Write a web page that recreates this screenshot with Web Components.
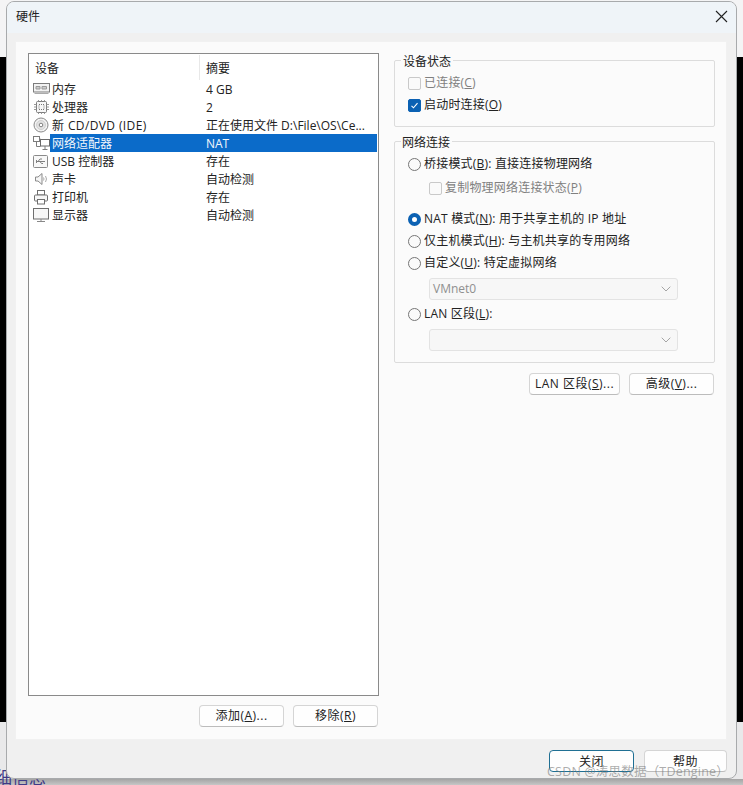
<!DOCTYPE html>
<html><head><meta charset="utf-8"><style>
html,body{margin:0;padding:0}
body{width:743px;height:785px;overflow:hidden;font:12px/16px "Open Sans","Noto Sans CJK SC",sans-serif;color:#222}
</style></head><body>
<template id="t-desktop"><style>
:host{display:block;position:relative;width:743px;height:785px;overflow:hidden;background:#e9e9ea}
.top{position:absolute;left:0;right:0;top:0;height:57px;background:#f4f4f5}
.black{position:absolute;left:0;right:0;top:57px;height:665px;background:#000}
.txt{position:absolute;left:-5px;top:765px;font:17px/24px "Noto Sans CJK SC",sans-serif;color:#3f3a86;white-space:nowrap}
.strip{position:absolute;left:0;right:0;top:779px;height:6px;background:linear-gradient(#a4a4a4,#c6c6c6)}
.win{position:absolute;left:6px;top:1px}
.wm{position:absolute;left:547px;top:764px;font:12.5px/16px "Open Sans","Noto Sans CJK SC",sans-serif;color:rgba(120,120,120,.62);white-space:nowrap;letter-spacing:.2px}
</style><div class="top"></div><div class="black"></div><div class="strip"></div><div class="txt">细信息</div>
<div class="win"><slot></slot></div><div class="wm">CSDN @涛思数据（TDengine）</div></template>

<template id="t-dialog"><style>
:host{display:flex;flex-direction:column;width:731px;height:778px;box-sizing:border-box;background:#f0f0f0;border:1px solid #a8aaac;border-radius:8px;overflow:hidden}
.bar{flex:none;height:31px;box-sizing:border-box;padding:0 8px 2px 9px;display:flex;align-items:center;justify-content:space-between;background:#eff4f8;font-size:12px}
.bar svg{display:block}
.main{flex:none;margin:8px 9px 0 8px;height:699px;display:flex;background:#fbfbfb;border:1px solid #f1f1f1;box-sizing:border-box}
.foot{flex:none;display:flex;justify-content:flex-end;gap:10px;padding:10px 9px 0 0}
</style><div class="bar"><span>硬件</span><svg width="13" height="13" viewBox="0 0 13 13"><path d="M1 1l11 11M12 1L1 12" stroke="#222" stroke-width="1.1" fill="none"/></svg></div>
<div class="main"><slot name="main"></slot></div><div class="foot"><slot name="foot"></slot></div></template>

<template id="t-btn"><style>
:host{display:flex;align-items:center;justify-content:center;box-sizing:border-box;height:22px;background:#fefefe;border:1px solid #d5d5d5;border-bottom-color:#bcbcbc;border-radius:4px;font-size:12px;color:#222;white-space:nowrap}
:host([primary]){border:1.5px solid #1f6f93}
:host([slot=foot][low]){padding-top:2px}
span{letter-spacing:.5px}
</style><span><slot></slot></span></template>

<template id="t-left"><style>
:host{display:flex;flex-direction:column;width:351px;margin:11px 0 0 12px;flex:none}
.foot{display:flex;justify-content:flex-end;gap:9px;margin-top:9px;padding-right:1px}
.list{box-sizing:border-box;height:643px;border:1px solid #8a8a8a;background:#fff;padding:1px}
</style><div class="list"><slot></slot></div><div class="foot"><slot name="foot"></slot></div></template>

<template id="t-head"><style>
:host{display:grid;grid-template-columns:169px 1fr;height:25px;align-items:center;margin-right:1px}
div{height:100%;display:flex;align-items:center;padding:2px 0 0 5px;box-sizing:border-box}
div+div{border-left:1px solid #e8e8e8;padding-left:6px}
</style><div>设备</div><div>摘要</div></template>

<template id="t-row"><style>
:host{display:grid;grid-template-columns:20px 149px 1fr;height:18px;align-items:center}
.i{padding-left:3px;height:18px;display:flex;align-items:center}
.n,.v{height:18px;line-height:20px;white-space:nowrap;padding-left:2px}
.v{padding-left:7px}
:host([selected]) .n,:host([selected]) .v{background:#0b6bc9;color:#f2f6fb}
:host([wide]) .n{letter-spacing:.38px}
</style><div class="i"><slot name="icon"></slot></div><div class="n"><slot></slot></div><div class="v"><slot name="val"></slot></div></template>

<template id="t-right"><style>
:host{display:flex;flex-direction:column;width:321px;margin:18px 0 0 15px;flex:none}
.foot{display:flex;justify-content:flex-end;gap:9px;margin-top:10px;padding-right:1px}
</style><slot></slot><div class="foot"><slot name="foot"></slot></div></template>

<template id="t-group"><style>
:host{display:block;position:relative;box-sizing:border-box;border:1px solid #dcdcdc;border-radius:2px;padding:11px 0 0 13px}
.lg{position:absolute;left:6px;top:-7px;padding:0 2px;background:#fbfbfb;line-height:16px}
</style><div class="lg"><slot name="legend"></slot></div><slot></slot></template>

<template id="t-opt"><style>
:host{display:flex;align-items:center;height:22px;gap:3px;white-space:nowrap}
:host([indent]){margin-left:21px}
:host([disabled]){color:#808080}
.b{width:11px;height:11px;border:1px solid #8d8d8d;border-radius:2px;background:#fafafa;flex:none;display:flex;align-items:center;justify-content:center}
:host([disabled]) .b{border-color:#c9c9c9}
:host([radio]) .b{border-radius:50%;border-color:#767676}
:host([checked]) .b{background:#0b61b3;border-color:#0b61b3}
:host([radio][checked]) .b{background:#fff;border:4px solid #0b61b3;width:5px;height:5px}
svg{display:none}
:host([checked]:not([radio])) svg{display:block}
.t{letter-spacing:.2px}
</style><div class="b"><svg width="9" height="9" viewBox="0 0 9 9"><path d="M1.5 4.8l2 2 4-4.6" stroke="#fff" stroke-width="1.1" fill="none"/></svg></div><span class="t"><slot></slot></span></template>

<template id="t-sel"><style>
:host{display:flex;align-items:center;justify-content:space-between;box-sizing:border-box;height:22px;width:249px;margin-left:21px;padding:0 6px 0 3px;border:1px solid #e3e3e3;border-radius:3px;background:#f7f7f7;color:#8f8f8f}
svg{display:block}
</style><span><slot></slot></span><svg width="10" height="6" viewBox="0 0 10 6"><path d="M.7.7L5 5 9.3.7" stroke="#a5a5a5" fill="none"/></svg></template>

<hw-desktop>
<hw-dialog>
 <hw-left slot="main">
  <hw-head></hw-head>
  <hw-row><svg slot="icon" width="17" height="14" viewBox="0 0 17 14" fill="none" stroke="#7c7c7c"><rect x=".5" y="1.500" width="16" height="8.500" fill="#f2f2f2"/><path d="M3 4.500h4v2.500H3zM9 4.500h4.500v2.500H9z" fill="#ccc" stroke="#9a9a9a"/><path d="M1.500 11.500h14" stroke="#aaa"/></svg>内存<span slot="val">4 GB</span></hw-row>
  <hw-row><svg slot="icon" width="17" height="16" viewBox="0 0 17 16" fill="none" stroke="#7c7c7c"><rect x="3.500" y="2.500" width="10" height="11" rx="1" fill="#f7f7f7"/><path d="M5.500 1v1.500M8.500 1v1.500M11.500 1v1.500M5.500 13.500V15M8.500 13.500V15M11.500 13.500V15M1 5.500h2.500M1 8h2.500M1 10.500h2.500M13.500 5.500H16M13.500 8H16M13.500 10.500H16" stroke="#999"/><rect x="6" y="5.500" width="5" height="5" stroke="#777" stroke-dasharray="1 1"/></svg>处理器<span slot="val">2</span></hw-row>
  <hw-row wide><svg slot="icon" width="16" height="16" viewBox="0 0 16 16" fill="none" stroke="#8a8a8a"><circle cx="8" cy="8" r="7" fill="#f2f2f2"/><circle cx="8" cy="8" r="4.500" stroke="#d0d0d0" fill="#e2e2e2"/><circle cx="8" cy="8" r="1.800" fill="#fff" stroke="#808080"/></svg>新 CD/DVD (IDE)<span slot="val">正在使用文件 D:\File\OS\Ce...</span></hw-row>
  <hw-row selected><svg slot="icon" width="17" height="14" viewBox="0 0 17 14" fill="none" stroke="#7c7c7c"><rect x=".5" y=".5" width="6" height="5" fill="#fff"/><rect x="7.500" y="3.500" width="9" height="6.500" fill="#fff" stroke="#6a6a6a"/><path d="M3.500 5.500v5h4M12 10v3M9.500 13.500h5M6.500 3h1" stroke="#7c7c7c"/></svg>网络适配器<span slot="val">NAT</span></hw-row>
  <hw-row><svg slot="icon" width="16" height="15" viewBox="0 0 16 15" fill="none" stroke="#8a8a8a"><rect x=".5" y="1.500" width="14" height="12" rx="1" fill="#f8f8f8"/><path d="M3 7.500h9M5 7.500l2-2.500h2M7 7.500l1.500 2H10M3.500 6v3" stroke="#808080"/></svg>USB 控制器<span slot="val">存在</span></hw-row>
  <hw-row><svg slot="icon" width="15" height="14" viewBox="0 0 15 14" fill="none" stroke="#8a8a8a"><path d="M2.500 5h2.500l4-3.500v11l-4-3.500H2.500z" fill="#f6f6f6"/><path d="M10.500 5.500q1 1.500 0 3M12.500 4q2 3 0 6" stroke="#aaa"/></svg>声卡<span slot="val">自动检测</span></hw-row>
  <hw-row><svg slot="icon" width="16" height="15" viewBox="0 0 16 15" fill="none" stroke="#6e6e6e"><rect x="4.500" y=".5" width="7" height="4.500" fill="#fff"/><rect x="1.500" y="5" width="13" height="6" rx="1" fill="#f6f6f6"/><rect x="4.500" y="9.500" width="7" height="4.500" fill="#fff"/></svg>打印机<span slot="val">存在</span></hw-row>
  <hw-row><svg slot="icon" width="17" height="15" viewBox="0 0 17 15" fill="none" stroke="#6e6e6e"><rect x=".5" y=".5" width="15" height="10.500" fill="#f7f7f7"/><path d="M8 11v2M4 13.500h8" stroke="#888"/></svg>显示器<span slot="val">自动检测</span></hw-row>
  <hw-btn slot="foot" style="width:85px">添加(<u>A</u>)...</hw-btn>
  <hw-btn slot="foot" style="width:85px">移除(<u>R</u>)</hw-btn>
 </hw-left>
 <hw-right slot="main">
  <hw-group style="height:67px"><span slot="legend">设备状态</span>
   <hw-opt disabled>已连接(<u>C</u>)</hw-opt>
   <hw-opt checked>启动时连接(<u>O</u>)</hw-opt>
  </hw-group>
  <hw-group style="height:222px;margin-top:14px"><span slot="legend" style="margin-left:-1px">网络连接</span>
   <hw-opt radio>桥接模式(<u>B</u>): 直接连接物理网络</hw-opt>
   <hw-opt indent disabled style="height:26px">复制物理网络连接状态(<u>P</u>)</hw-opt>
   <hw-opt radio checked style="margin-top:7px">NAT 模式(<u>N</u>): 用于共享主机的 IP 地址</hw-opt>
   <hw-opt radio>仅主机模式(<u>H</u>): 与主机共享的专用网络</hw-opt>
   <hw-opt radio>自定义(<u>U</u>): 特定虚拟网络</hw-opt>
   <hw-sel style="margin-top:4px">VMnet0</hw-sel>
   <hw-opt radio style="height:28px">LAN 区段(<u>L</u>):</hw-opt>
   <hw-sel style="margin-top:1px"></hw-sel>
  </hw-group>
  <hw-btn slot="foot" style="width:91px">LAN 区段(<u>S</u>)...</hw-btn>
  <hw-btn slot="foot" style="width:85px">高级(<u>V</u>)...</hw-btn>
 </hw-right>
 <hw-btn slot="foot" primary low style="width:85px">关闭</hw-btn>
 <hw-btn slot="foot" low style="width:83px">帮助</hw-btn>
</hw-dialog>
</hw-desktop>
<script>
for (const n of ['desktop','dialog','btn','left','head','row','right','group','opt','sel']) {
  customElements.define('hw-'+n, class extends HTMLElement {
    constructor(){super();this.attachShadow({mode:'open'}).appendChild(document.getElementById('t-'+n).content.cloneNode(true));}
  });
}
</script>
</body></html>
